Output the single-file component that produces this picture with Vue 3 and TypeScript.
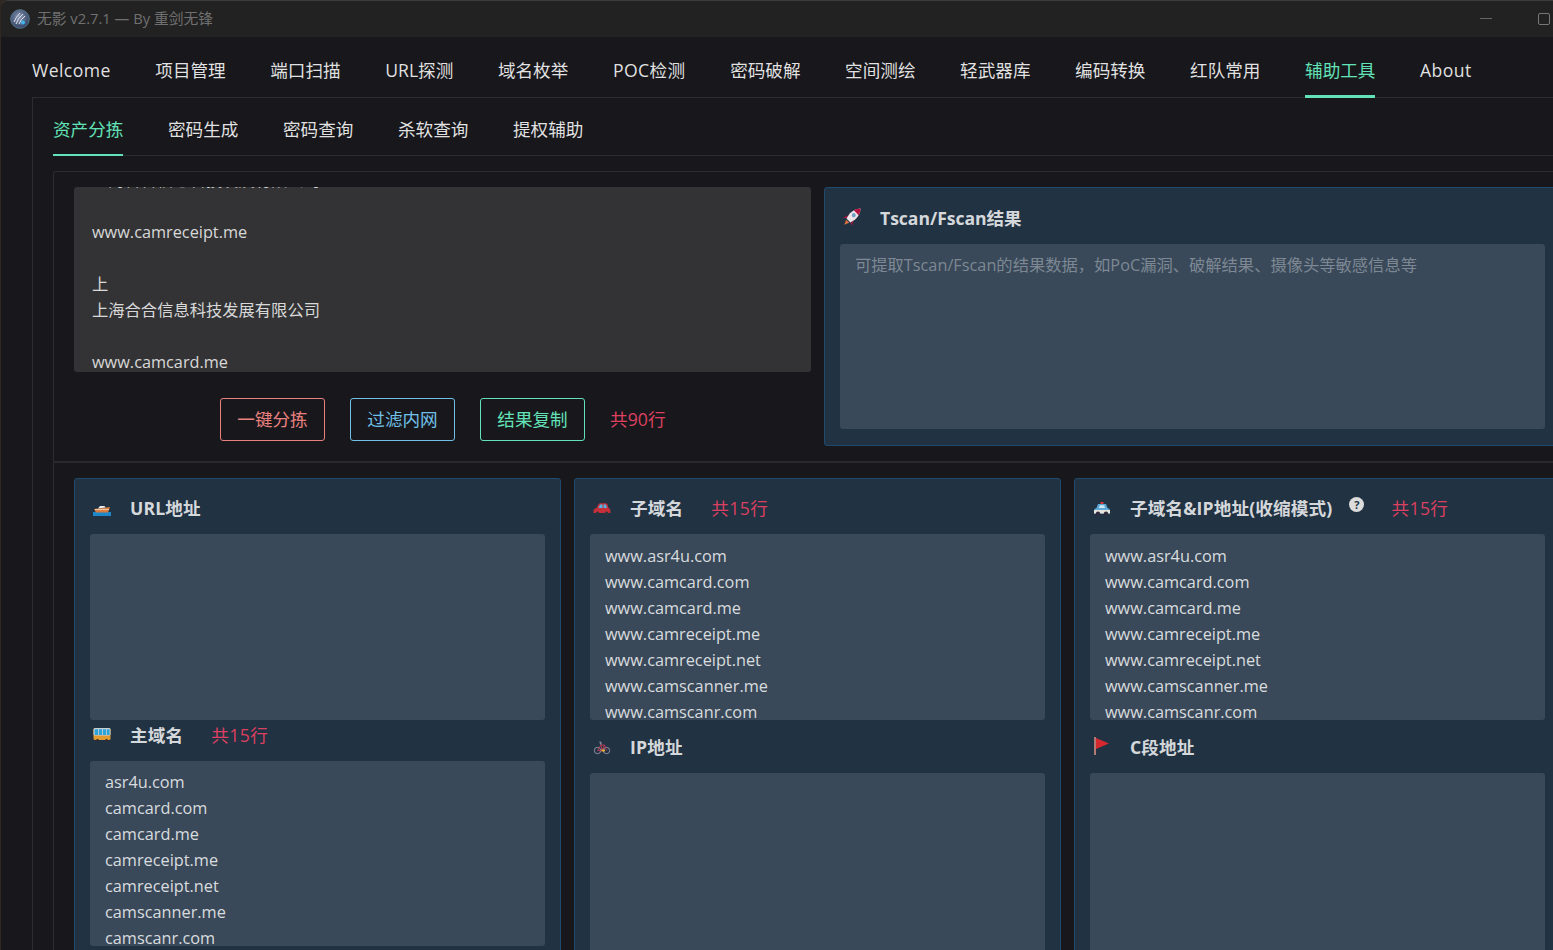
<script setup lang="ts">
type Section = {
  icon: string
  title: string
  count?: string
  help?: boolean
  lines?: string[]
  tight?: boolean
}

const mainTabs = ['Welcome', '项目管理', '端口扫描', 'URL探测', '域名枚举', 'POC检测', '密码破解', '空间测绘', '轻武器库', '编码转换', '红队常用', '辅助工具', 'About']
const latinTabs = ['Welcome', 'POC检测', 'About']
const subTabs = ['资产分拣', '密码生成', '密码查询', '杀软查询', '提权辅助']

const sub = ['www.asr4u.com', 'www.camcard.com', 'www.camcard.me', 'www.camreceipt.me', 'www.camreceipt.net', 'www.camscanner.me', 'www.camscanr.com']
const roots = ['asr4u.com', 'camcard.com', 'camcard.me', 'camreceipt.me', 'camreceipt.net', 'camscanner.me', 'camscanr.com']

const columns: Section[][] = [
  [
    { icon: 'boat', title: 'URL地址' },
    { icon: 'bus', title: '主域名', count: '共15行', lines: roots, tight: true },
  ],
  [
    { icon: 'car', title: '子域名', count: '共15行', lines: sub },
    { icon: 'bike', title: 'IP地址' },
  ],
  [
    { icon: 'police', title: '子域名&IP地址(收缩模式)', count: '共15行', help: true, lines: sub },
    { icon: 'flag', title: 'C段地址' },
  ],
]

const rawLines = ['上海合合信息科技发展有限公司', '', 'www.camreceipt.me', '', '上', '上海合合信息科技发展有限公司', '', 'www.camcard.me']
</script>

<template>
  <div class="window">
    <header class="titlebar">
      <svg class="logo" viewBox="0 0 20 20" width="20" height="20">
        <defs>
          <radialGradient id="lg" cx="45%" cy="40%" r="65%">
            <stop offset="0" stop-color="#8a99b5" />
            <stop offset="1" stop-color="#2c3a5c" />
          </radialGradient>
        </defs>
        <circle cx="10" cy="10" r="9.3" fill="url(#lg)" stroke="#5d8aa0" stroke-width="0.8" />
        <path d="M4 13 Q6 8 10 4 M6 15 Q8 9 13 5 M9 15 Q11 10 15 7" fill="none" stroke="#e4e8f0" stroke-width="1" />
        <circle cx="13" cy="13.5" r="2" fill="#3fb4ef" />
      </svg>
      <span class="title">无影 v2.7.1 — By 重剑无锋</span>
      <i class="win-min"></i>
      <i class="win-max"></i>
    </header>

    <nav class="tabs main-tabs">
      <span
        v-for="t in mainTabs"
        :key="t"
        class="tab"
        :class="{ active: t === '辅助工具', latin: latinTabs.includes(t) }"
      >{{ t }}</span>
    </nav>

    <section class="panel">
      <nav class="tabs sub-tabs">
        <span v-for="t in subTabs" :key="t" class="tab" :class="{ active: t === '资产分拣' }">{{ t }}</span>
      </nav>

      <div class="block top-block">
        <div class="raw-col">
          <div class="raw-box">
            <div class="raw-lines">
              <div v-for="(l, i) in rawLines" :key="i" class="line">{{ l }}</div>
            </div>
          </div>
          <div class="actions">
            <button type="button" class="btn red"><span>一键分拣</span></button>
            <button type="button" class="btn blue"><span>过滤内网</span></button>
            <button type="button" class="btn green"><span>结果复制</span></button>
            <span class="total">共90行</span>
          </div>
        </div>
        <div class="card tscan">
          <h3 class="head">
            <svg class="icon" viewBox="0 0 18 18" width="18" height="18">
              <g transform="rotate(45 9 9)">
                <path d="M3.2 15.5 L5.6 9.5 V14 Z M14.8 15.5 L12.4 9.5 V14 Z" fill="#b5123f" />
                <path d="M9 -3 C12.4 0.5 13 5 13 8.5 L11.8 14 H6.2 L5 8.5 C5 5 5.6 0.5 9 -3Z" fill="#f1e4e8" />
                <path d="M9 -3 C10.8 -1.2 11.9 1 12.4 3 H5.6 C6.1 1 7.2 -1.2 9 -3Z" fill="#b5123f" />
                <circle cx="9" cy="6.5" r="2" fill="#6fa3c4" />
                <path d="M6.8 15 H11.2 L9 20Z" fill="#d9713f" />
              </g>
            </svg>
            <span class="name tscan-name">Tscan/Fscan结果</span>
          </h3>
          <div class="box tscan-box">
            <span class="placeholder">可提取Tscan/Fscan的结果数据，如PoC漏洞、破解结果、摄像头等敏感信息等</span>
          </div>
        </div>
      </div>

      <div class="block bottom-block">
        <div v-for="(col, c) in columns" :key="c" class="card column">
          <template v-for="(s, i) in col" :key="s.title">
            <h3 class="head" :class="{ second: i === 1, tight: s.tight }">
              <svg class="icon" viewBox="0 0 18 18" width="18" height="18">
                <g v-if="s.icon === 'boat'">
                  <path d="M0 14 H18 V18 H0Z" fill="#1c87c9" />
                  <path d="M1 11 L17 9 L15 14.5 H3Z" fill="#d97b3a" />
                  <path d="M5 10.5 L7 8 H11.5 L12.5 9.5Z" fill="#e8edf2" />
                  <path d="M2 11.6 H16" stroke="#f2e3d0" stroke-width="0.8" />
                </g>
                <g v-else-if="s.icon === 'car'">
                  <path d="M0.5 13 Q0.5 10.5 3.5 10 L5.5 6.2 Q6 5.2 7.5 5.2 H12.5 Q14 5.2 14.5 6.5 L15.5 10 Q17.5 10.5 17.5 13 V15 H0.5Z" fill="#c62f3a" />
                  <path d="M5.4 10 L7 6.6 H9.6 V10Z M10.6 6.6 H13 L14 10 H10.6Z" fill="#54b1e0" />
                  <circle cx="4.5" cy="15.2" r="1.8" fill="#33333d" />
                  <circle cx="13.5" cy="15.2" r="1.8" fill="#33333d" />
                </g>
                <g v-else-if="s.icon === 'police'">
                  <path d="M7.5 4 H10.5 V6 H7.5Z" fill="#d83c3c" />
                  <path d="M1 12 Q1.5 10.5 3.5 10 L5 6 H13 L14.5 10 Q16.5 10.5 17 12 V15.5 H1Z" fill="#5aa9d6" />
                  <path d="M6 10 L6.8 7.2 H11.2 L12 10Z" fill="#cbe6f4" />
                  <path d="M1 12 H17 V15.5 H1Z" fill="#e8e4dc" />
                  <circle cx="5" cy="15.6" r="2.2" fill="#2f2a3d" />
                  <circle cx="13" cy="15.6" r="2.2" fill="#2f2a3d" />
                </g>
                <g v-else-if="s.icon === 'bus'">
                  <rect x="0.5" y="3" width="17" height="12" rx="1.5" fill="#e09a30" />
                  <rect x="0.5" y="3" width="17" height="7.5" rx="1.5" fill="#c8d0d6" />
                  <path d="M1.6 4.2 H5 V10 H1.6Z M5.8 4.2 H9 V10 H5.8Z M9.8 4.2 H13 V10 H9.8Z M13.8 4.2 H16.6 V10 H13.8Z" fill="#2ca3d9" />
                  <circle cx="4.5" cy="15.6" r="1.6" fill="#2e2c33" />
                  <circle cx="13.5" cy="15.6" r="1.6" fill="#2e2c33" />
                </g>
                <g v-else-if="s.icon === 'bike'" fill="none">
                  <circle cx="4.5" cy="13.5" r="3.2" stroke="#8d8aa0" stroke-width="1" />
                  <circle cx="13.5" cy="13.5" r="3.2" stroke="#8d8aa0" stroke-width="1" />
                  <path d="M4.5 13.5 L8 8 L11.5 8 L13.5 13.5 M8 8 L9 13.5 H4.5 M9 13.5 L11.5 8" stroke="#b33a52" stroke-width="1" />
                  <path d="M6.5 6 H9 M7 4.2 L8 8" stroke="#8d8aa0" stroke-width="1" />
                  <path d="M8.5 12.5 H12 V14.5 H8.5Z" fill="#e6ad3a" />
                </g>
                <g v-else>
                  <rect x="1" y="0" width="2" height="18" fill="#b07a72" />
                  <path d="M3 1 L16 6.5 L3 12Z" fill="#d5292f" />
                </g>
              </svg>
              <span class="name">{{ s.title }}</span>
              <span v-if="s.help" class="help">?</span>
              <span v-if="s.count" class="count">{{ s.count }}</span>
            </h3>
            <div class="box">
              <div v-for="l in s.lines" :key="l" class="line">{{ l }}</div>
            </div>
          </template>
        </div>
      </div>
    </section>
  </div>
</template>

<style>
html, body { margin: 0; height: 100%; overflow: hidden; background: #2e2820; }
</style>

<style scoped>
.window {
  width: 1552px;
  height: 950px;
  box-sizing: border-box;
  margin-left: 1px;
  border-top: 1px solid #3c3c3c;
  border-top-left-radius: 8px;
  overflow: hidden;
  background: #18181c;
  color: rgba(255, 255, 255, 0.82);
  font-family: "Open Sans", "Noto Sans CJK SC", sans-serif;
  font-size: 16.3px;
}

.titlebar { height: 36px; background: #222222; display: flex; align-items: center; padding: 0 0 1px 9px; position: relative; box-sizing: border-box; }
.logo { flex: none; }
.title { margin-left: 7px; font-size: 14.75px; line-height: 20px; margin-top: -1px; color: #707070; }
.win-min { position: absolute; left: 1479px; top: 17px; width: 12px; height: 1px; background: #666; }
.win-max { position: absolute; left: 1537px; top: 12px; width: 10px; height: 10px; border: 1px solid #777; border-radius: 2px; }

.tabs { display: flex; gap: 44.6px; box-sizing: border-box; font-size: 17.6px; }
.tab { white-space: nowrap; line-height: 26px; color: rgba(255, 255, 255, 0.88); }
.tab.latin { letter-spacing: 0.42px; }
.tab.active { color: #63e2b7; }

.main-tabs { height: 60px; padding-left: 31px; position: relative; }
.main-tabs .tab { padding: 20px 0 11px; border-bottom: 3px solid transparent; height: 61px; box-sizing: border-box; }
.main-tabs .tab.active { border-bottom-color: #63e2b7; }

.panel { margin-left: 31px; border-left: 1px solid #2d2d30; border-top: 1px solid #2d2d30; padding-left: 20px; }

.sub-tabs { height: 58px; margin-bottom: 15px; border-bottom: 1px solid #2d2d30; }
.sub-tabs .tab { padding: 18px 0 11px; margin-bottom: -1px; border-bottom: 2px solid transparent; }
.sub-tabs .tab.active { border-bottom-color: #63e2b7; }

.block { border: 1px solid #2d2d30; border-right: 0; padding-left: 20px; width: 1560px; box-sizing: border-box; }
.top-block { display: flex; gap: 13px; height: 290px; padding-top: 15px; border-radius: 3px 0 0 0; border-bottom: 0; }
.bottom-block { display: grid; grid-template-columns: 487px 487px 487px; gap: 13px; border-top: 2px solid #2a2a2d; padding-top: 15px; height: 520px; border-bottom: 0; }

.raw-col { width: 737px; flex: none; }
.raw-box { height: 185px; overflow: hidden; background: #333335; border-radius: 3px; padding-left: 18px; }
.raw-lines { margin-top: -20px; }
.line { height: 26px; line-height: 26px; white-space: nowrap; }
.actions { display: flex; align-items: center; gap: 25px; margin-top: 26px; padding-left: 146px; }
.btn { width: 105px; height: 43px; box-sizing: border-box; padding: 0 0 2px; background: none; border: 1px solid; border-radius: 3px; font: inherit; font-size: 17.6px; }
.btn.red { color: #e88080; border-color: #e88080; }
.btn.blue { color: #70c0e8; border-color: #70c0e8; }
.btn.green { color: #63e2b7; border-color: #63e2b7; }
.total { color: #dd4060; font-size: 17.6px; margin-top: -2px; letter-spacing: 0.1px; }

.card { background: #213243; border: 1px solid #1f4a6e; border-radius: 3px; padding: 0 15px; box-sizing: border-box; }
.tscan { width: 737px; height: 259px; flex: none; padding-top: 17px; }
.column { width: 487px; padding-top: 16px; height: 500px; }

.head { display: flex; align-items: center; height: 26px; box-sizing: border-box; padding-bottom: 2px; margin: 0 0 13px; font-size: 17.6px; font-weight: 700; color: rgba(255, 255, 255, 0.82); }
.head.second { margin-top: 14px; }
.head.second.tight { margin-top: 2px; }
.icon { flex: none; margin-left: 3px; overflow: visible; }
.name { margin-left: 19px; white-space: nowrap; letter-spacing: 0.15px; }
.tscan-name { letter-spacing: -0.05px; }
.help { width: 15px; height: 15px; margin: -6px 0 0 17px; border-radius: 50%; background: #dcdcdc; color: #213243; font-size: 11px; font-weight: 700; line-height: 15px; text-align: center; }
.count { margin-left: 28px; color: #dd4060; font-weight: 400; letter-spacing: 0.4px; }
.help + .count { margin-left: 27px; }

.box { height: 186px; background: #394959; border-radius: 3px; padding: 9px 15px 0; box-sizing: border-box; overflow: hidden; }
.head.tight + .box { height: 185px; padding-top: 8px; }
.tscan-box { height: 185px; padding-top: 8px; }
.placeholder { line-height: 26px; color: #7d8894; }
</style>
